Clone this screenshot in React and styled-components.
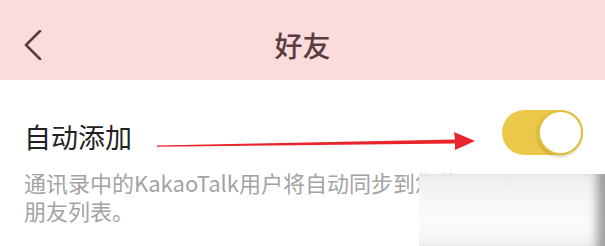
import React from "react";
import styled, { createGlobalStyle } from "styled-components";

const GlobalStyle = createGlobalStyle`
  html, body {
    margin: 0;
    padding: 0;
    background: #ffffff;
  }
  body {
    font-family: "Noto Sans CJK SC", "Noto Sans", sans-serif;
  }
`;

const Screen = styled.div`
  position: relative;
  width: 605px;
  height: 246px;
  overflow: hidden;
  background: #ffffff;
`;

const NavBar = styled.header`
  height: 80px;
  box-sizing: border-box;
  padding-top: 10px;
  background: #fadcdd;
  display: grid;
  grid-template-columns: 80px 1fr 80px;
  align-items: center;
`;

const BackButton = styled.button`
  border: 0;
  background: none;
  padding: 0 0 0 24px;
  display: flex;
  align-items: center;
  color: #5b3d40;
  cursor: pointer;
`;

const Title = styled.h1`
  margin: 0;
  text-align: center;
  font-size: 28px;
  font-weight: 500;
  line-height: 1;
  color: #5b3d40;
`;

const Content = styled.section`
  padding: 30px 22px 0 24px;
`;

const SettingRow = styled.div`
  display: flex;
  align-items: center;
  justify-content: space-between;
`;

const Label = styled.span`
  font-size: 27px;
  line-height: 1;
  padding-top: 8px;
  color: #222222;
`;

const Track = styled.div`
  position: relative;
  width: 81px;
  height: 45px;
  border-radius: 23px;
  background: ${(p) => (p.$on ? "#ebc84a" : "#dddddd")};
`;

const Knob = styled.div`
  position: absolute;
  top: 0;
  ${(p) => (p.$on ? "right: 0;" : "left: 0;")}
  width: 45px;
  height: 45px;
  border-radius: 50%;
  background: #ffffff;
  box-sizing: border-box;
  border: 2px solid #e2bf3f;
  box-shadow: -1px 2px 3px rgba(150, 120, 20, 0.35);
`;

const Description = styled.div`
  margin-top: 13px;
  font-size: 22px;
  line-height: 28px;
  color: #a3a3a3;
`;

const Line = styled.div`
  white-space: nowrap;
`;

const Arrow = styled.svg`
  position: absolute;
  left: 150px;
  top: 128px;
`;

const Watermark = styled.div`
  position: absolute;
  left: 419px;
  top: 174px;
  right: 0;
  bottom: 0;
  background: linear-gradient(180deg, #ececec 0%, #f7f7f7 35%, #fbfbfb 70%, #f1f1f1 100%);
  box-shadow: inset -14px 0 10px -6px rgba(90, 90, 90, 0.55);
`;

function Toggle({ on }) {
  return (
    <Track $on={on}>
      <Knob $on={on} />
    </Track>
  );
}

export default function App() {
  return (
    <>
      <GlobalStyle />
      <Screen>
        <NavBar>
          <BackButton aria-label="返回">
            <svg width="18" height="30" viewBox="0 0 18 30">
              <polyline
                points="16,1 2,15 16,29"
                fill="none"
                stroke="currentColor"
                strokeWidth="2.6"
                strokeLinecap="round"
                strokeLinejoin="round"
              />
            </svg>
          </BackButton>
          <Title>好友</Title>
          <span />
        </NavBar>
        <Content>
          <SettingRow>
            <Label>自动添加</Label>
            <Toggle on />
          </SettingRow>
          <Description>
            <Line>通讯录中的KakaoTalk用户将自动同步到您的Kakao</Line>
            <Line>朋友列表。</Line>
          </Description>
        </Content>
        <Arrow width="330" height="26" viewBox="0 0 330 26">
          <polygon
            points="7,17.4 305,11.4 304,4 325,13 305,22 305,15.4 7,18.8"
            fill="#e8252c"
          />
        </Arrow>
        <Watermark />
      </Screen>
    </>
  );
}
